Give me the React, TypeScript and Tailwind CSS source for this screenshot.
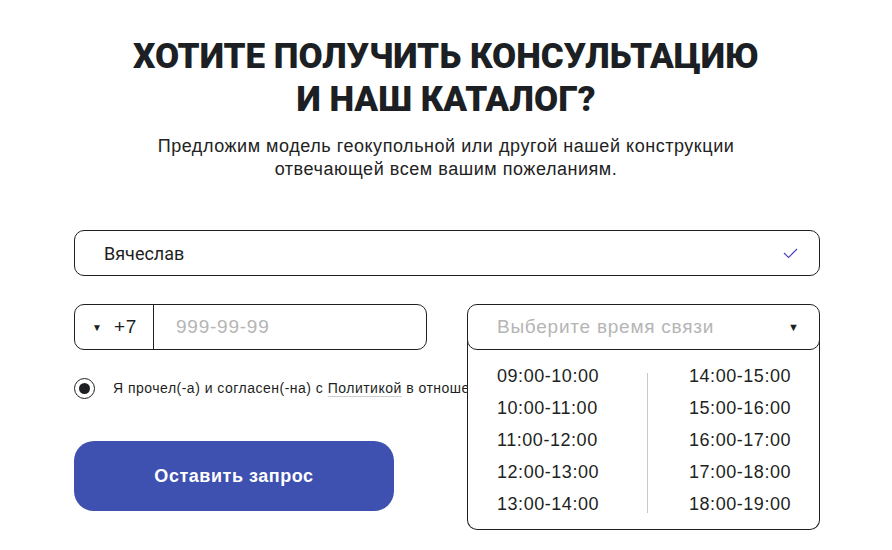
import React from 'react';

const leftSlots = ['09:00-10:00', '10:00-11:00', '11:00-12:00', '12:00-13:00', '13:00-14:00'];
const rightSlots = ['14:00-15:00', '15:00-16:00', '16:00-17:00', '17:00-18:00', '18:00-19:00'];

export default function App() {
  return (
    <div className="w-[892px] h-[550px] bg-white overflow-hidden font-['Liberation_Sans',Arial,sans-serif] text-[#1d1f22]">
      <div className="w-[746px] ml-[74px] pt-[35px]">
        {/* Заголовок */}
        <h1 className="pr-[2px] text-center font-['Roboto',sans-serif] font-black text-[35px] leading-[43px] uppercase text-[#1c1f23]">
          Хотите получить консультацию
          <br />
          и наш каталог?
        </h1>
        <p className="mt-[14px] pr-[2px] text-center text-[18px] leading-[23px] tracking-[0.03em] text-[#222]">
          Предложим модель геокупольной или другой нашей конструкции
          <br />
          отвечающей всем вашим пожеланиям.
        </p>

        {/* Имя */}
        <div className="mt-[49px] h-[46px] flex items-center justify-between pl-[29px] pr-[21px] border border-[#1d1f22] rounded-[10px]">
          <span className="font-['Roboto',sans-serif] text-[18px]">Вячеслав</span>
          <svg width="15" height="11" viewBox="0 0 15 11" fill="none">
            <path d="M1 5L5.5 9.5L14 1" stroke="#4a45c0" strokeWidth="1.2" />
          </svg>
        </div>

        <div className="mt-[28px] flex gap-[40px]">
          {/* Левая колонка */}
          <div className="w-[353px] shrink-0">
            <div className="h-[46px] flex border border-[#1d1f22] rounded-[10px]">
              <div className="w-[79px] flex items-center pl-[17px] gap-[12px] border-r border-[#1d1f22]">
                <span className="text-[10px]">▼</span>
                <span className="text-[19px] tracking-[0.04em]">+7</span>
              </div>
              <div className="flex items-center pl-[22px] text-[19px] tracking-[0.04em] text-[#b5b5b5]">999-99-99</div>
            </div>
            <div className="mt-[28px] flex items-center gap-[18px] whitespace-nowrap">
              <div className="w-[21px] h-[21px] shrink-0 rounded-full border-[1.5px] border-[#1d1f22] flex items-center justify-center">
                <div className="w-[11px] h-[11px] rounded-full bg-[#1d1f22]" />
              </div>
              <span className="text-[14px] tracking-[0.035em]">
                Я прочел(-а) и согласен(-на) с{' '}
                <span className="underline decoration-[#cfcfcf] underline-offset-[3px]">Политикой</span> в отношении обработки персональных данных
              </span>
            </div>
            <button className="mt-[42px] w-[320px] h-[70px] rounded-[20px] bg-[#3e50b0] text-white font-bold text-[18px] tracking-[0.03em]">
              Оставить запрос
            </button>
          </div>

          {/* Время связи */}
          <div className="relative flex-1 z-10">
            <div className="relative z-10 h-[46px] flex items-center justify-between pl-[29px] pr-[20px] bg-white border border-[#1d1f22] rounded-[10px]">
              <span className="text-[19px] tracking-[0.04em] text-[#b5b5b5]">Выберите время связи</span>
              <span className="text-[11px]">▼</span>
            </div>
            <div className="absolute left-0 right-0 top-[36px] h-[190px] bg-white border-x border-b border-[#1d1f22] rounded-b-[10px] pt-[25px] flex">
              <div className="w-[179px] pl-[29px] flex flex-col gap-[10px] text-[18px] leading-[22px] tracking-[0.03em]">
                {leftSlots.map((s) => (
                  <span key={s}>{s}</span>
                ))}
              </div>
              <div className="mt-[8px] w-px h-[140px] bg-[#c8c8c8]" />
              <div className="flex-1 pl-[41px] flex flex-col gap-[10px] text-[18px] leading-[22px] tracking-[0.03em]">
                {rightSlots.map((s) => (
                  <span key={s}>{s}</span>
                ))}
              </div>
            </div>
          </div>
        </div>
      </div>
    </div>
  );
}
